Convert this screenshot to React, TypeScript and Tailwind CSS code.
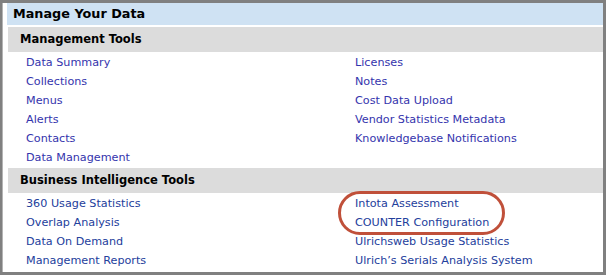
const managementLeft = ['Data Summary', 'Collections', 'Menus', 'Alerts', 'Contacts', 'Data Management']
const managementRight = ['Licenses', 'Notes', 'Cost Data Upload', 'Vendor Statistics Metadata', 'Knowledgebase Notifications']
const biLeft = ['360 Usage Statistics', 'Overlap Analysis', 'Data On Demand', 'Management Reports']
const biRight = ['Intota Assessment', 'COUNTER Configuration', 'Ulrichsweb Usage Statistics', 'Ulrich\u2019s Serials Analysis System']

function LinkColumn({ items, color }: { items: string[]; color: string }) {
  return (
    <ul>
      {items.map((item) => (
        <li key={item} className="h-[19px] pt-[2px] flex items-center">
          <a href="#" className={`text-[11.2px] leading-none ${color} whitespace-nowrap`}>
            {item}
          </a>
        </li>
      ))}
    </ul>
  )
}

function Section({ title, left, right, color }: { title: string; left: string[]; right: string[]; color: string }) {
  return (
    <div className="mt-[2px]">
      <h3 className="ml-[1px] h-[25px] bg-[#dcdcdc] pl-[12px] flex items-center text-[11.5px] font-bold text-black">
        {title}
      </h3>
      <div className="grid grid-cols-[329px_1fr] pl-[19px]">
        <LinkColumn items={left} color={color} />
        <LinkColumn items={right} color={color} />
      </div>
    </div>
  )
}

export default function App() {
  return (
    <div className="w-[606px] h-[275px] bg-[#808080] pt-[3px] pb-[3px] pr-[3px] pl-[2px] font-['DejaVu_Sans',Verdana,sans-serif]">
      <div className="relative h-full bg-white border-l border-l-[#b4b4b4] pl-[4px]">
        <h2 className="h-[22px] bg-[#cfe2f3] pl-[6px] flex items-center text-[12.8px] font-bold text-black">
          Manage Your Data
        </h2>
        <Section title="Management Tools" left={managementLeft} right={managementRight} color="text-[#3434ad]" />
        <Section title="Business Intelligence Tools" left={biLeft} right={biRight} color="text-[#23409c]" />

        {/* annotation ring */}
        <div className="absolute left-[335px] top-[188px] w-[167px] h-[44px] rounded-[22px] border-[3px] border-[#c0503a] pointer-events-none" />
      </div>
    </div>
  )
}
